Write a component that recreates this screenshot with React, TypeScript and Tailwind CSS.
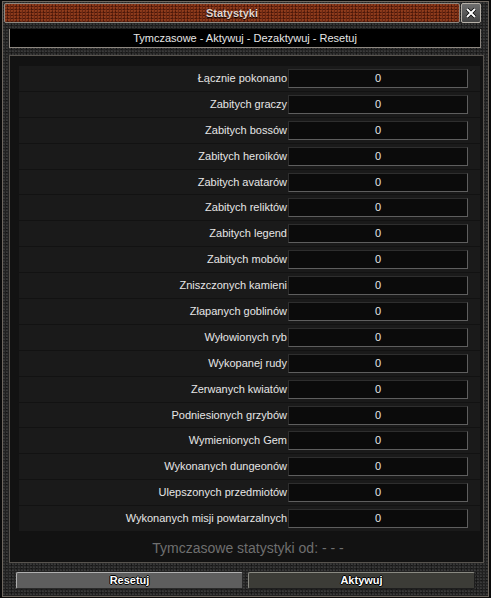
import React from "react";

const rows = [
  "Łącznie pokonano",
  "Zabitych graczy",
  "Zabitych bossów",
  "Zabitych heroików",
  "Zabitych avatarów",
  "Zabitych reliktów",
  "Zabitych legend",
  "Zabitych mobów",
  "Zniszczonych kamieni",
  "Złapanych goblinów",
  "Wyłowionych ryb",
  "Wykopanej rudy",
  "Zerwanych kwiatów",
  "Podniesionych grzybów",
  "Wymienionych Gem",
  "Wykonanych dungeonów",
  "Ulepszonych przedmiotów",
  "Wykonanych misji powtarzalnych",
];

function StatRow({ label }: { label: string }) {
  return (
    <div className="flex items-center h-[25px] mb-[1px] w-[461px] bg-[#1a1a1a]">
      <div className="w-[269px] pr-[1px] text-right text-[11px] text-[#e6e6e6] leading-none">
        {label}
      </div>
      <div className="w-[180px] h-[19px] flex items-center justify-center bg-[#0b0b0b] border border-[#2e2e2e] border-b-[#5e5e5e] border-r-[#5e5e5e] text-[11px] text-[#e6e6e6] leading-none">
        0
      </div>
    </div>
  );
}

export default function App() {
  return (
    <div
      className="w-[491px] h-[598px] bg-[#0a0a0a] pt-[1px] px-[2px] pb-[1px]"
      style={{ fontFamily: '"Liberation Sans", Arial, sans-serif' }}
    >
      <div className="h-full border border-[#6e675f] bg-[#222222] bg-[radial-gradient(circle_at_30%_40%,#3a3a3a_0.6px,transparent_1.2px),radial-gradient(circle_at_70%_75%,#141414_0.7px,transparent_1.3px)] bg-[length:3px_3px,5px_4px] flex flex-col">
        {/* title */}
        <div className="flex mt-[1px] ml-[1px]">
          <div className="w-[456px] h-[20px] border border-[#8d8780] rounded-[2px] bg-[#6a2712] bg-[radial-gradient(circle_at_30%_30%,#8f3c1c_0.7px,transparent_1.3px),radial-gradient(circle_at_70%_70%,#4a1708_0.7px,transparent_1.3px)] bg-[length:3px_3px,4px_3px] flex items-center justify-center">
            <span className="text-[11px] font-bold text-[#e2d4ce] leading-none [text-shadow:0_1px_1px_#000]">
              Statystyki
            </span>
          </div>
          <div className="ml-[1px] w-[20px] h-[20px] border border-[#b5b0a8] rounded-[2px] bg-[#5a5a5a] bg-[linear-gradient(#6e6e6e,#444)] flex items-center justify-center">
            <svg width="12" height="12" viewBox="0 0 12 12">
              <path d="M2 2 L10 10 M10 2 L2 10" stroke="#000" strokeWidth="3.4" />
              <path d="M2 2 L10 10 M10 2 L2 10" stroke="#fff" strokeWidth="2" />
            </svg>
          </div>
        </div>

        {/* sub header */}
        <div className="mt-[6px] ml-[6px] w-[472px] h-[19px] bg-black border-l border-r border-b border-[#8d8780] flex items-center justify-center text-[11px] text-[#e6e6e6] leading-none">
          Tymczasowe - Aktywuj - Dezaktywuj - Resetuj
        </div>

        {/* stats panel */}
        <div className="mt-[7px] ml-[6px] w-[475px] h-[508px] border border-[#57534e] bg-[#121212] pt-[10px] pl-[9px] flex flex-col">
          {rows.map((r) => (
            <StatRow key={r} label={r} />
          ))}
          <div className="h-[30px] flex items-center justify-center pr-[6px] pt-[2px] text-[14px] text-[#6f6f6f] leading-none">
            Tymczasowe statystyki od: - - -
          </div>
        </div>

        {/* buttons */}
        <div className="mt-[9px] ml-[13px] flex gap-[5px]">
          <div className="w-[227px] h-[17px] rounded-[2px] border-t border-l border-[#b0b0b0] border-b border-r border-b-[#2a2a2a] border-r-[#2a2a2a] bg-[#5e5e5e] flex items-center justify-center">
            <span className="text-[11px] font-bold text-white leading-none [text-shadow:1px_0_0_#000,-1px_0_0_#000,0_1px_0_#000,0_-1px_0_#000]">
              Resetuj
            </span>
          </div>
          <div className="w-[227px] h-[17px] rounded-[2px] border-t border-l border-[#8a8a82] border-b border-r border-b-[#1e1e1e] border-r-[#1e1e1e] bg-[#3c3c37] flex items-center justify-center">
            <span className="text-[11px] font-bold text-white leading-none [text-shadow:1px_0_0_#000,-1px_0_0_#000,0_1px_0_#000,0_-1px_0_#000]">
              Aktywuj
            </span>
          </div>
        </div>
      </div>
    </div>
  );
}
